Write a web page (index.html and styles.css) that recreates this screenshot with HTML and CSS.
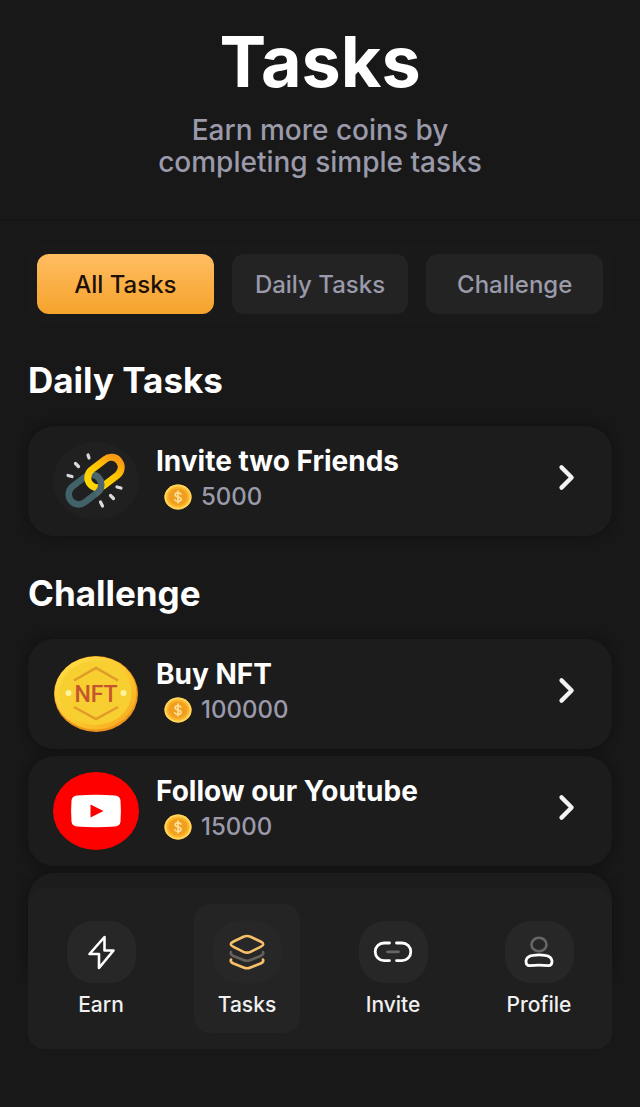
FILE: index.html
```html
<!DOCTYPE html>
<html lang="en">

<head>
  <meta charset="UTF-8">
  <meta name="viewport" content="width=device-width, initial-scale=1">
  <title>Tasks</title>
  <link rel="stylesheet" href="styles.css">
</head>

<body>
  <svg class="defs" aria-hidden="true">
    <defs>
      <linearGradient id="gold" x1="0" y1="0" x2="1" y2="1">
        <stop offset="0" stop-color="#ffde4a"/>
        <stop offset="0.6" stop-color="#fbc62c"/>
        <stop offset="1" stop-color="#f5a21c"/>
      </linearGradient>
      <linearGradient id="yellow" gradientUnits="userSpaceOnUse" x1="34" y1="38" x2="68" y2="24">
        <stop offset="0" stop-color="#ffd800"/>
        <stop offset="0.6" stop-color="#ffc400"/>
        <stop offset="1" stop-color="#fb9a14"/>
      </linearGradient>
      <clipPath id="front">
        <path d="M41 42V26H60V70H46z"/>
      </clipPath>
      <symbol id="coin" viewBox="0 0 28 26">
        <ellipse cx="14" cy="13" rx="13.5" ry="12.5" fill="#fbb52d"/>
        <ellipse cx="14" cy="13" rx="12.5" ry="11.5" fill="none" stroke="#ffd65c" stroke-width="2"/>
        <ellipse cx="14" cy="13" rx="9.5" ry="8.5" fill="#f0a01e"/>
        <path d="M17 10.2c-.5-1-1.600-1.500-3-1.500-1.700 0-2.900.8-2.900 2 0 2.900 6 1.500 6 4.500 0 1.300-1.300 2.200-3.100 2.200-1.600 0-2.800-.6-3.300-1.700M14 7v12" fill="none" stroke="#ffe3a0" stroke-width="1.500" stroke-linecap="round"/>
      </symbol>
      <symbol id="chevron" viewBox="0 0 16 24">
        <path d="M4 3l9 9-9 9" fill="none" stroke="#f3f3f5" stroke-width="3.800" stroke-linecap="round" stroke-linejoin="round"/>
      </symbol>
    </defs>
  </svg>

  <header class="header">
    <h1>Tasks</h1>
    <p>Earn more coins by<br>completing simple tasks</p>
  </header>

  <main class="content">
    <div class="tabs">
      <button type="button" class="tab active">All Tasks</button>
      <button type="button" class="tab">Daily Tasks</button>
      <button type="button" class="tab">Challenge</button>
    </div>

    <section>
      <h2>Daily Tasks</h2>
      <div class="list">
        <a href="#" class="card">
          <svg class="card-icon" viewBox="0 0 86 78" aria-hidden="true">
            <ellipse cx="43" cy="39" rx="43" ry="39" fill="#202020"/>
            <rect x="14" y="37.500" width="36" height="20" rx="10" transform="rotate(-38 32 47.500)" fill="none" stroke="#42626a" stroke-width="6.500"/>
            <rect x="33" y="20.500" width="37" height="20" rx="10" transform="rotate(-38 51.500 30.500)" fill="none" stroke="url(#yellow)" stroke-width="7"/>
            <g clip-path="url(#front)">
              <rect x="14" y="37.500" width="36" height="20" rx="10" transform="rotate(-38 32 47.500)" fill="none" stroke="#4b666d" stroke-width="6.500"/>
            </g>
            <path d="M15 33.500l4 1M22.500 21.500l3 3M35 13l1 3M64 45l4 1M57.500 53.500l3 3M47.500 60l2 4" fill="none" stroke="#d9d9df" stroke-width="3.200" stroke-linecap="round"/>
          </svg>
          <div class="card-text">
            <h3>Invite two Friends</h3>
            <p class="reward"><svg class="coin" aria-hidden="true"><use href="#coin"/></svg>5000</p>
          </div>
          <svg class="chevron" aria-hidden="true"><use href="#chevron"/></svg>
        </a>
      </div>
    </section>

    <section>
      <h2>Challenge</h2>
      <div class="list">
        <a href="#" class="card">
          <svg class="card-icon" viewBox="0 0 86 78" aria-hidden="true">
            <ellipse cx="43" cy="39" rx="42" ry="38" fill="#ee941c"/>
            <ellipse cx="42.500" cy="38" rx="41" ry="36.500" fill="url(#gold)"/>
            <ellipse cx="42.500" cy="38" rx="36" ry="32" fill="#f8cf30"/>
            <path d="M21 25.500L43 13l22 12.500M21 52l22 12 22-12" fill="none" stroke="#e29a28" stroke-width="2.500"/>
            <text x="43" y="47" text-anchor="middle" class="nft">NFT</text>
            <circle cx="15.500" cy="38" r="3" fill="#fff3a0"/>
            <circle cx="70.500" cy="38" r="3" fill="#fff3a0"/>
          </svg>
          <div class="card-text">
            <h3>Buy NFT</h3>
            <p class="reward"><svg class="coin" aria-hidden="true"><use href="#coin"/></svg>100000</p>
          </div>
          <svg class="chevron" aria-hidden="true"><use href="#chevron"/></svg>
        </a>
        <a href="#" class="card">
          <svg class="card-icon" viewBox="0 0 86 78" aria-hidden="true">
            <ellipse cx="43" cy="39" rx="43" ry="39" fill="#fe0000"/>
            <path d="M24 23.500q19-1.500 38 0 5 .5 5.500 5 .8 10.500 0 21-.5 4.500-5.500 5-19 1.500-38 0-5-.5-5.500-5-.8-10.500 0-21 .5-4.500 5.500-5z" fill="#fff"/>
            <path d="M37.500 32.500v13l13-6.500z" fill="#fe0000"/>
          </svg>
          <div class="card-text">
            <h3>Follow our Youtube</h3>
            <p class="reward"><svg class="coin" aria-hidden="true"><use href="#coin"/></svg>15000</p>
          </div>
          <svg class="chevron" aria-hidden="true"><use href="#chevron"/></svg>
        </a>
        <div class="card"></div>
      </div>
    </section>
  </main>

  <nav class="nav">
    <a href="#" class="nav-item">
      <span class="nav-icon">
        <svg viewBox="0 0 40 36" aria-hidden="true">
          <path d="M23.500 3L8.500 20h9.500V34L32.500 16.500h-9z" fill="none" stroke="#fff" stroke-width="2.600" stroke-linejoin="round"/>
        </svg>
      </span>
      Earn
    </a>
    <a href="#" class="nav-item active">
      <span class="nav-icon">
        <svg viewBox="0 0 40 36" fill="none" stroke-width="2.600" stroke-linecap="round" stroke-linejoin="round" aria-hidden="true">
          <path d="M4 18q-1 2.500 2.500 4l10 4q3.500 1.500 7 0l10-4q3.500-1.500 2.500-4" stroke="#66605a"/>
          <path d="M4 25.500q-1 2.500 2.500 4l10 4q3.500 1.500 7 0l10-4q3.500-1.500 2.500-4" stroke="#f6c06a"/>
          <path d="M16.500 2.800q3.500-1.500 7 0l10 4.700q5.500 2.700 0 5.400l-10 5q-3.500 1.500-7 0l-10-5q-5.500-2.700 0-5.400z" stroke="#f6c06a"/>
        </svg>
      </span>
      Tasks
    </a>
    <a href="#" class="nav-item">
      <span class="nav-icon">
        <svg viewBox="0 0 40 36" fill="none" stroke-width="2.800" stroke-linecap="round" aria-hidden="true">
          <path d="M16.500 9H11a8.800 8.800 0 0 0 0 17.600h5.500M23.500 9H29a8.800 8.800 0 0 1 0 17.600h-5.500" stroke="#fff"/>
          <path d="M14.500 17.800h11" stroke="#666"/>
        </svg>
      </span>
      Invite
    </a>
    <a href="#" class="nav-item">
      <span class="nav-icon">
        <svg viewBox="0 0 40 36" fill="none" aria-hidden="true">
          <ellipse cx="20" cy="10.500" rx="7.500" ry="6.800" stroke="#666" stroke-width="2.600"/>
          <path d="M7 27q.5-5 7-5.700 6-.8 12 0 6.500.7 7 5.700 0 4.700-3.500 4.700-9.500-1.200-19 0-3.500 0-3.500-4.700z" stroke="#fff" stroke-width="2.800" stroke-linejoin="round"/>
        </svg>
      </span>
      Profile
    </a>
  </nav>
</body>

</html>
```
FILE: styles.css
```css
* {
  box-sizing: border-box;
}

body {
  margin: 0;
  min-height: 100vh;
  font-family: Inter, "Liberation Sans", sans-serif;
  background-color: #181818;
  color: #fff;
}

h1,
h2,
h3,
p {
  margin: 0;
}

a {
  color: inherit;
  text-decoration: none;
}

.defs {
  position: absolute;
  width: 0;
  height: 0;
}

.header {
  padding: 22px 28px 41px;
  border-bottom: 2px solid #151515;
  text-align: center;
}

.header h1 {
  font-size: 70px;
  line-height: 80px;
  font-weight: 700;
}

.header p {
  margin-top: 12px;
  font-size: 28px;
  line-height: 32px;
  font-weight: 500;
  color: #9a9aaa;
}

.content {
  padding: 24px 28px 0;
}

.tabs {
  display: grid;
  grid-template-columns: repeat(3, 1fr);
  gap: 18px;
  padding: 9px;
  border-radius: 16px;
  background-color: #191919;
}

.tab {
  height: 60px;
  padding: 0;
  border: 0;
  border-radius: 12px;
  background-color: #232324;
  color: #9a9aaa;
  font-family: inherit;
  font-size: 24px;
  font-weight: 500;
  cursor: pointer;
}

.tab.active {
  background-image: linear-gradient(#ffbd62, #f5a32b);
  color: #1c1008;
}

h2 {
  padding: 37px 0 26px;
  font-size: 35px;
  line-height: 40px;
  font-weight: 700;
}

.list {
  display: grid;
  gap: 7px;
}

.card {
  display: flex;
  align-items: center;
  min-height: 110px;
  padding: 0 36px 0 25px;
  border-radius: 26px;
  background-color: #1c1c1d;
  box-shadow: 0 0 8px 1px #111;
}

.card-icon {
  flex: none;
  width: 86px;
  height: 78px;
}

.card-text {
  flex: 1;
  margin: 0 0 5px 17px;
}

.card h3 {
  font-size: 28px;
  line-height: 36px;
  font-weight: 700;
}

.reward {
  display: flex;
  align-items: center;
  gap: 9px;
  padding-left: 8px;
  font-size: 24px;
  line-height: 36px;
  font-weight: 500;
  color: #9a9aaa;
}

.coin {
  width: 28px;
  height: 26px;
}

.chevron {
  flex: none;
  width: 20px;
  height: 27px;
  margin-bottom: 8px;
}

.nft {
  font-family: Roboto, sans-serif;
  font-size: 23px;
  font-weight: 500;
  fill: #c4552f;
}

.nav {
  position: fixed;
  left: 28px;
  right: 28px;
  bottom: 58px;
  display: grid;
  grid-template-columns: repeat(4, 1fr);
  padding: 16px 0;
  border-radius: 16px;
  background-color: #1f1f1f;
}

.nav-item {
  display: flex;
  flex-direction: column;
  align-items: center;
  gap: 8px;
  margin: 0 20px;
  padding: 17px 0 14px;
  border-radius: 16px;
  font-size: 21px;
  line-height: 28px;
  font-weight: 500;
  color: #f0f0f0;
}

.nav-item.active {
  background-color: #242424;
}

.nav-icon {
  display: flex;
  align-items: center;
  justify-content: center;
  width: 69px;
  height: 62px;
  border-radius: 26px;
  background-color: #272727;
}

.nav-icon svg {
  width: 40px;
  height: 36px;
}
```
